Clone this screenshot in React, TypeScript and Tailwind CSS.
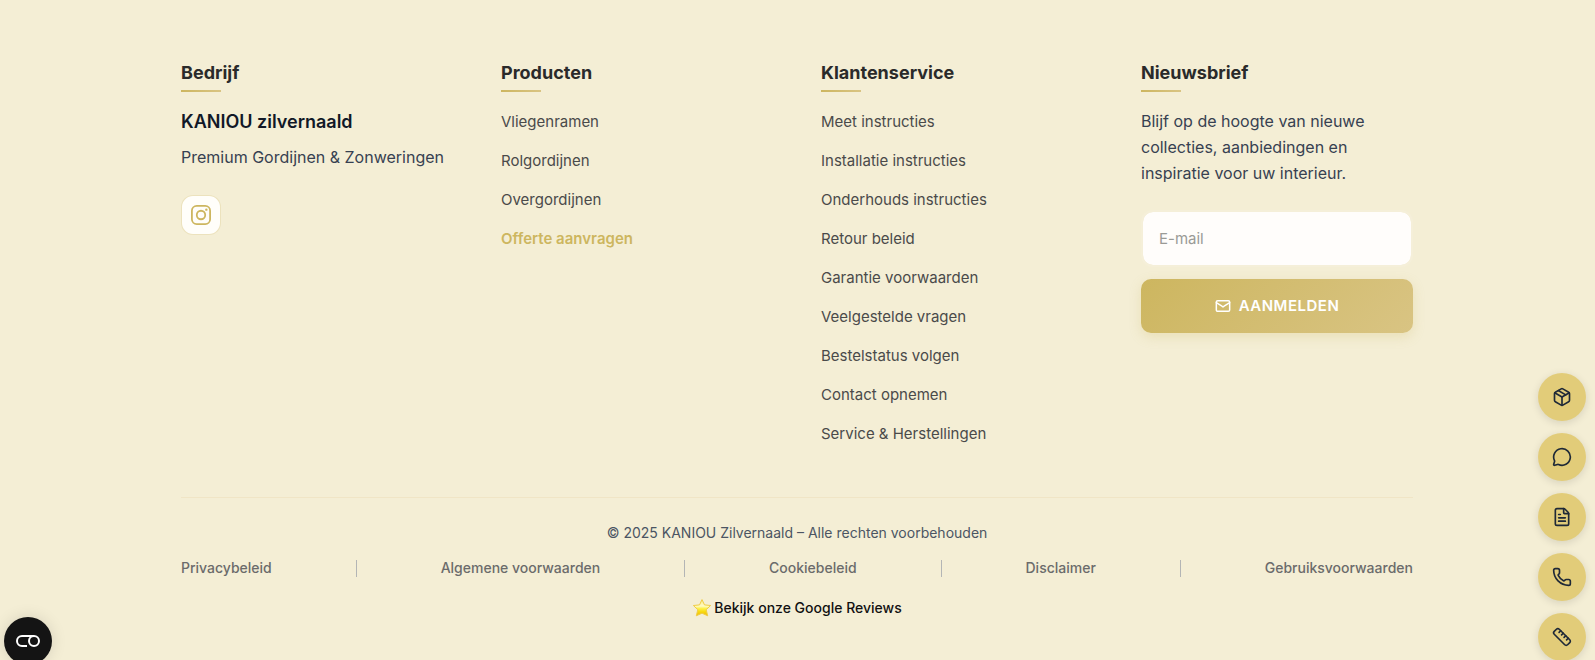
import type { ReactNode } from "react";
import { FileText, Mail, MessageCircle, Package, Phone, Ruler } from "lucide-react";

const products = ["Vliegenramen", "Rolgordijnen", "Overgordijnen"];

const service = [
  "Meet instructies",
  "Installatie instructies",
  "Onderhouds instructies",
  "Retour beleid",
  "Garantie voorwaarden",
  "Veelgestelde vragen",
  "Bestelstatus volgen",
  "Contact opnemen",
  "Service & Herstellingen",
];

const legal = ["Privacybeleid", "Algemene voorwaarden", "Cookiebeleid", "Disclaimer", "Gebruiksvoorwaarden"];

const quickActions = [
  { label: "Monsters", Icon: Package },
  { label: "Chat", Icon: MessageCircle },
  { label: "Offerte", Icon: FileText },
  { label: "Bellen", Icon: Phone },
  { label: "Opmeten", Icon: Ruler },
];

function Column({ title, children }: { title: string; children: ReactNode }) {
  return (
    <section>
      <h3 className="text-lg leading-7 font-bold text-[#2a2a2a]">{title}</h3>
      <div className="mt-[3px] mb-4 h-0.5 w-10 bg-linear-to-r from-[#cdb65f] to-[#d9c483]" />
      {children}
    </section>
  );
}

function LinkList({ items, children }: { items: string[]; children?: ReactNode }) {
  return (
    <ul className="flex flex-col gap-3 text-[15px] leading-[27px] text-[#4a4a4a]">
      {items.map((item) => (
        <li key={item}>
          <a href="#">{item}</a>
        </li>
      ))}
      {children}
    </ul>
  );
}

function InstagramIcon() {
  return (
    <svg viewBox="0 0 24 24" className="size-5" fill="none" stroke="currentColor" strokeWidth="2.16" aria-hidden="true">
      <rect x="1.08" y="1.08" width="21.84" height="21.84" rx="5.8" />
      <circle cx="12" cy="12" r="5.08" />
      <circle cx="18.41" cy="5.59" r="1.44" fill="currentColor" stroke="none" />
    </svg>
  );
}

function StarIcon() {
  return (
    <svg viewBox="0 0 20 20" className="size-5" aria-hidden="true">
      <defs>
        <linearGradient id="star" x1="0" y1="0" x2="0" y2="1">
          <stop offset="0" stopColor="#fbe98a" />
          <stop offset="0.4" stopColor="#fffbc4" />
          <stop offset="0.55" stopColor="#fdf04a" />
          <stop offset="0.75" stopColor="#f8d90f" />
          <stop offset="1" stopColor="#eeb90a" />
        </linearGradient>
      </defs>
      <path
        d="M10 1.6l2.5 5.3 6.1.6-4.4 4.2 1.5 6.1L10 15.2 4.3 17.8l1.5-6.1L1.4 7.5l6.1-.6z"
        fill="url(#star)"
        stroke="#f0cd45"
        strokeWidth="1"
        strokeLinejoin="round"
      />
    </svg>
  );
}

export default function App() {
  return (
    <div className="min-h-screen overflow-hidden bg-[#f4eed5] pr-px font-['Inter',sans-serif]">
      <footer className="mx-auto max-w-7xl px-6 pt-[59px] pb-8">
        <div className="grid grid-cols-4 gap-12">
          <Column title="Bedrijf">
            <h4 className="text-lg leading-7 font-semibold text-[#111827]">KANIOU zilvernaald</h4>
            <p className="mt-2 text-base leading-[26px] whitespace-nowrap text-[#374151]">
              Premium Gordijnen &amp; Zonweringen
            </p>
            <a
              href="#"
              aria-label="Instagram"
              className="mt-[25px] flex size-10 items-center justify-center rounded-xl border border-[#cdb65f]/20 bg-[#fffefa] bg-clip-padding text-[#cdb65f]"
            >
              <InstagramIcon />
            </a>
          </Column>
          <Column title="Producten">
            <LinkList items={products}>
              <li>
                <a href="#" className="font-semibold text-[#cdb65f]">
                  Offerte aanvragen
                </a>
              </li>
            </LinkList>
          </Column>
          <Column title="Klantenservice">
            <LinkList items={service} />
          </Column>
          <Column title="Nieuwsbrief">
            <p className="text-base leading-[26px] text-[#374151]">
              Blijf op de hoogte van nieuwe collecties, aanbiedingen en inspiratie voor uw interieur.
            </p>
            <form className="mt-6 flex flex-col gap-3" onSubmit={(e) => e.preventDefault()}>
              <input
                type="email"
                aria-label="E-mail"
                placeholder="E-mail"
                className="h-[57px] w-full rounded-xl border-2 border-[#f5efd9] bg-[#fffdfb] bg-clip-padding px-4 text-[15px] text-[#2a2a2a] placeholder:text-[#9a9a96]"
              />
              <button
                type="submit"
                className="flex h-[54px] w-full items-center justify-center gap-2 rounded-[10px] bg-linear-135 from-[#cdb65f] to-[#d9c483] text-[15px] font-semibold tracking-[0.5px] text-white uppercase shadow-[0_4px_12px_rgba(205,182,95,0.25)]"
              >
                <Mail size={16} strokeWidth={2.25} />
                Aanmelden
              </button>
            </form>
          </Column>
        </div>

        <div className="mt-[50px] border-t border-[#f0e5c6] pt-6">
          <p className="text-center text-sm leading-[22px] text-[#4b5563]">
            © 2025 KANIOU Zilvernaald – Alle rechten voorbehouden
          </p>
          <nav className="mt-3 flex items-center justify-between text-sm leading-6 font-medium text-[#6b6b6b]">
            {legal.map((item, i) => (
              <div key={item} className="contents">
                {i > 0 && <span className="h-[17px] w-px bg-[#b3b5b5]" />}
                <a href="#">{item}</a>
              </div>
            ))}
          </nav>
          <div className="mt-4 flex justify-center">
            <a href="#" className="flex items-center gap-0.5 text-sm leading-6 font-medium text-[#111111]">
              <StarIcon />
              Bekijk onze Google Reviews
            </a>
          </div>
        </div>
      </footer>

      <div className="fixed top-[373px] right-[9px] flex flex-col gap-3">
        {quickActions.map(({ label, Icon }) => (
          <button
            key={label}
            type="button"
            aria-label={label}
            className="flex size-12 items-center justify-center rounded-full bg-[#e2cc79] text-[#1f2937] shadow-[0_2px_8px_rgba(0,0,0,0.12)]"
          >
            <Icon size={20} strokeWidth={2} />
          </button>
        ))}
      </div>

      <button
        type="button"
        aria-label="Cookievoorkeuren"
        className="fixed -bottom-[5px] left-1 flex size-12 items-center justify-center rounded-full bg-[#141414] shadow-[0_0_16px_rgba(0,0,0,0.12)]"
      >
        <svg viewBox="0 0 24 12" className="h-3 w-6" fill="none" stroke="#ffffff" strokeWidth="2" aria-hidden="true">
          <path d="M18 1H6a5 5 0 0 0 0 10h5" />
          <circle cx="18" cy="6" r="5" />
        </svg>
      </button>
    </div>
  );
}
